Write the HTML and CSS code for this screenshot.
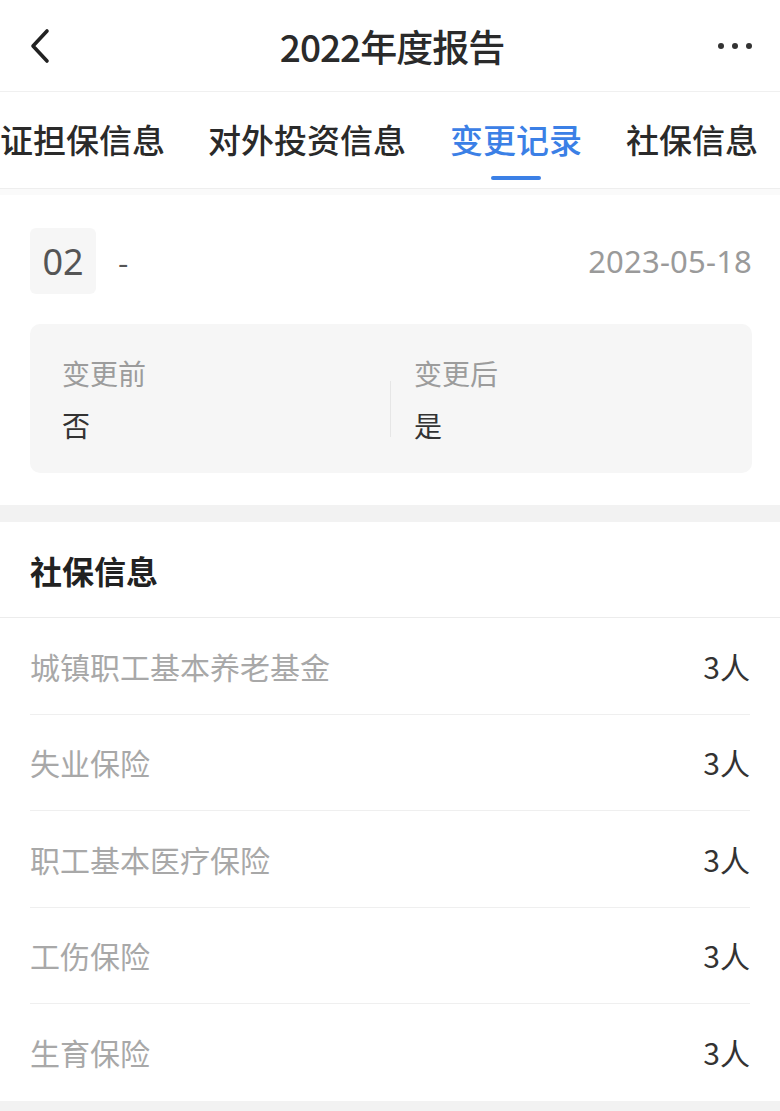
FILE: index.html
```html
<!DOCTYPE html>
<html lang="zh-CN">
<head>
<meta charset="utf-8">
<link rel="stylesheet" href="styles.css">
</head>
<body>
<div class="page">
  <header class="nav">
    <svg class="back" width="24" height="36" viewBox="0 0 24 36"><path d="M19 3 L5 18 L19 33" fill="none" stroke="#222" stroke-width="3.6" stroke-linecap="round" stroke-linejoin="round"/></svg>
    <div class="title">2022年度报告</div>
    <div class="more"><span></span><span></span><span></span></div>
  </header>
  <nav class="tabs">
    <div class="tab first">证担保信息</div>
    <div class="tab">对外投资信息</div>
    <div class="tab active">变更记录</div>
    <div class="tab">社保信息</div>
  </nav>
  <section class="record">
    <div class="rec-head">
      <div class="num">02</div>
      <div class="dash">-</div>
      <div class="date">2023-05-18</div>
    </div>
    <div class="change">
      <div class="col before">
        <div class="lbl">变更前</div>
        <div class="val">否</div>
      </div>
      <div class="sep"></div>
      <div class="col after">
        <div class="lbl">变更后</div>
        <div class="val">是</div>
      </div>
    </div>
  </section>
  <div class="gap"></div>
  <section class="social">
    <h2 class="sec-title">社保信息</h2>
    <div class="rows">
      <div class="row"><span class="k">城镇职工基本养老基金</span><span class="v">3人</span></div>
      <div class="row"><span class="k">失业保险</span><span class="v">3人</span></div>
      <div class="row"><span class="k">职工基本医疗保险</span><span class="v">3人</span></div>
      <div class="row"><span class="k">工伤保险</span><span class="v">3人</span></div>
      <div class="row"><span class="k">生育保险</span><span class="v">3人</span></div>
    </div>
  </section>
  <div class="gap bottom"></div>
</div>
</body>
</html>
```
FILE: styles.css
```css
* { box-sizing: border-box; margin: 0; padding: 0; }
html, body { background: #fff; }
body {
  font-family: "Noto Sans CJK SC", "Noto Sans", sans-serif;
  color: #333;
  width: 780px;
  overflow: hidden;
}
.page { width: 780px; height: 1111px; overflow: hidden; }

.nav {
  height: 92px;
  display: flex;
  align-items: center;
  justify-content: center;
  position: relative;
  border-bottom: 1px solid #f0f0f0;
}
.back { position: absolute; left: 28px; top: 28px; }
.title { font-size: 37px; color: #2a2a2a; font-weight: 500; letter-spacing: -1px; margin-left: 4px; }
.more { position: absolute; right: 28px; top: 43px; display: flex; gap: 8px; }
.more span { width: 6px; height: 6px; border-radius: 50%; background: #333; }

.tabs {
  height: 97px;
  display: flex;
  align-items: center;
  border-bottom: 1px solid #eeeeee;
  white-space: nowrap;
  overflow: hidden;
  padding-bottom: 2px;
}
.tab {
  font-size: 33px;
  font-weight: 500;
  color: #2a2a2a;
  position: relative;
  margin-right: 44px;
  flex-shrink: 0;
}
.tab.first { margin-right: 43px; }
.tab.active { color: #3b80e6; }
.tab.active::after {
  content: "";
  position: absolute;
  left: 50%;
  transform: translateX(-50%);
  bottom: -17px;
  width: 50px;
  height: 4px;
  border-radius: 2px;
  background: #3b80e6;
}

.record { padding: 33px 28px 32px 30px; border-top: 6px solid #fafafa; }
.rec-head { display: flex; align-items: center; height: 66px; }
.num {
  width: 66px; height: 66px;
  background: #f6f6f6;
  border-radius: 6px;
  display: flex; align-items: center; justify-content: center;
  font-size: 36px; color: #555;
  font-family: "Noto Sans", sans-serif;
}
.dash { margin-left: 22px; font-size: 30px; color: #555; }
.date { margin-left: auto; font-size: 31px; color: #9a9a9a; font-family: "Noto Sans", sans-serif; letter-spacing: 0.2px; }

.change {
  margin-top: 30px;
  background: #f6f6f6;
  border-radius: 10px;
  height: 149px;
  display: flex;
  align-items: center;
  padding: 0 32px;
}
.col.before { width: 328px; }
.col.after { flex: 1; padding-left: 23px; }
.lbl { font-size: 28px; color: #9c9c9c; line-height: 40px; }
.val { font-size: 28px; color: #333; line-height: 40px; margin-top: 12px; }
.sep { width: 1px; height: 56px; background: #e6e6e6; margin-top: 20px; }

.gap { height: 17px; background: #f2f2f2; }

.sec-title {
  height: 96px;
  font-size: 32px;
  font-weight: 700;
  color: #222;
  padding-left: 30px;
  display: flex;
  align-items: center;
  border-bottom: 1px solid #ececec;
}
.rows { padding: 0 30px; }
.row {
  height: 96.5px;
  display: flex;
  align-items: center;
  justify-content: space-between;
  border-bottom: 1px solid #efefef;
}
.row:last-child { border-bottom: none; }
.k { font-size: 30px; color: #a8a8a8; }
.v { font-size: 30px; color: #333; }
.gap.bottom { height: 20px; }
```
